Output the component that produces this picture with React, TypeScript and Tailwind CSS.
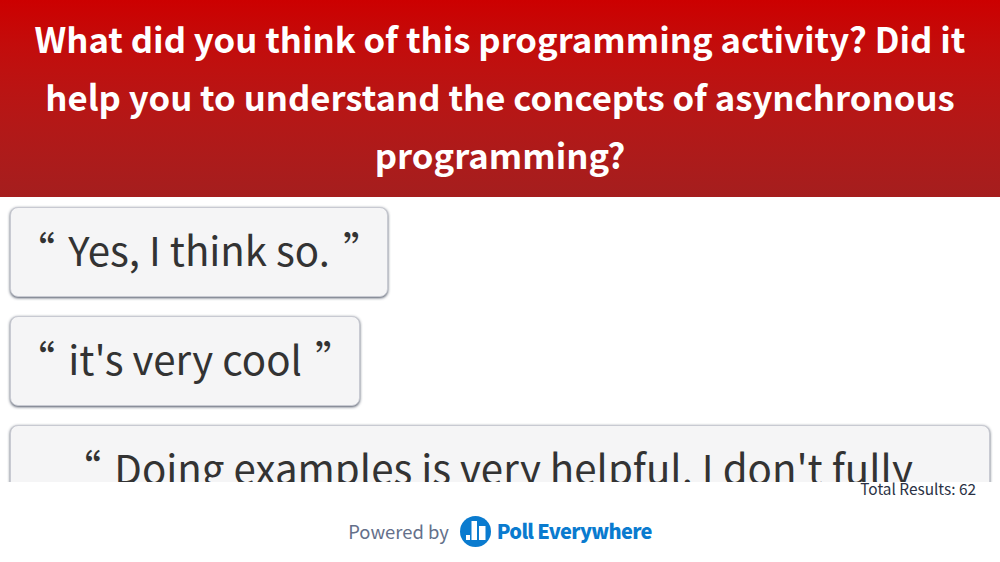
import { ReactNode } from 'react';

function Quote({ children, wide }: { children: ReactNode; wide?: boolean }) {
  return (
    <div
      className={`rounded-lg border border-[#c8cad2] bg-[#f5f5f6] pt-[12px] pb-[18px] text-center text-[40.2px] leading-[58px] text-[#333333] shadow-[0_1px_3px_rgba(30,40,60,0.8)] ${wide ? 'w-full pl-[4px] pr-[30px]' : 'w-fit px-[4px]'}`}
    >
      <span className="mr-[4px]">“</span> {children} <span className="ml-[4px]">”</span>
    </div>
  );
}

export default function App() {
  return (
    <div className="flex h-[562px] w-[1000px] flex-col overflow-hidden bg-white font-['Noto_Sans_CJK_SC','Noto_Sans',sans-serif]">
      <div className="h-[197px] shrink-0 bg-gradient-to-b from-[#cc0000] to-[#a51e1e] px-[20px] pt-[9px] text-center text-[34.7px] font-bold leading-[58px] text-white">
        What did you think of this programming activity? Did it help you to understand the concepts of asynchronous programming?
      </div>
      <div className="h-[285px] shrink-0 overflow-hidden">
        <div className="flex flex-col gap-[19px] px-[10px] pt-[10px]">
          <Quote>Yes, I think so.</Quote>
          <Quote>it's very cool</Quote>
          <Quote wide>Doing examples is very helpful. I don't fully understand it yet</Quote>
        </div>
      </div>
      <div className="pr-[24px] text-right text-[15.4px] leading-[13px] text-[#2b3245]">Total Results: 62</div>
      <div className="mt-[20px] flex items-center justify-center">
        <span className="mr-[11px] text-[18.4px] leading-[32px] text-[#64708a]">Powered by</span>
        <svg width="31" height="31" viewBox="0 0 31 31" className="mr-[6px]">
          <circle cx="15.5" cy="15.5" r="15.5" fill="#0a7bcf" />
          <rect x="6" y="19" width="4" height="5" fill="#fff" />
          <rect x="11.5" y="5" width="5.5" height="19" fill="#fff" />
          <rect x="19" y="10" width="6.5" height="14" fill="#fff" />
        </svg>
        <span className="text-[20px] font-black leading-[32px] tracking-[-0.7px] text-[#0a7bcf]">Poll Everywhere</span>
      </div>
    </div>
  );
}
